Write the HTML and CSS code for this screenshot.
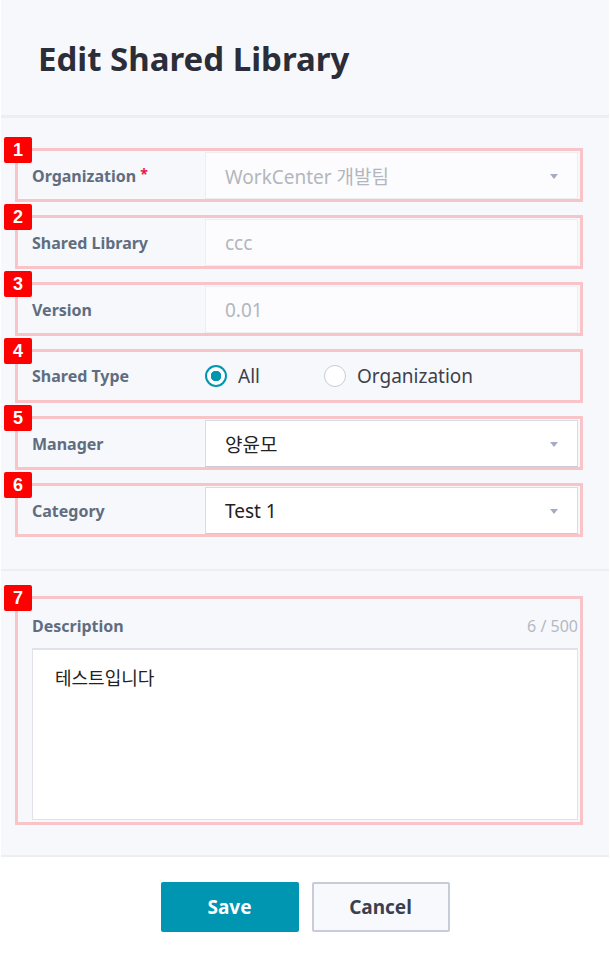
FILE: index.html
```html
<!DOCTYPE html>
<html lang="en">
  <head>
    <meta charset="UTF-8" />
    <meta name="viewport" content="width=device-width, initial-scale=1.0" />
    <title>Edit Shared Library</title>

    <link rel="stylesheet" href="styles.css">
  </head>
  <body>
    <div class="panel">
      <div class="panel-header">
        <h1 class="title">Edit Shared Library</h1>
      </div>

      <div class="form">
        <div class="row mark">
          <span class="badge">1</span>
          <label class="label">Organization <span class="req">*</span></label>
          <div class="field disabled select">WorkCenter 개발팀<span class="caret"></span></div>
        </div>

        <div class="row mark">
          <span class="badge">2</span>
          <label class="label">Shared Library</label>
          <div class="field disabled">ccc</div>
        </div>

        <div class="row mark">
          <span class="badge">3</span>
          <label class="label">Version</label>
          <div class="field disabled">0.01</div>
        </div>

        <div class="row mark">
          <span class="badge">4</span>
          <label class="label">Shared Type</label>
          <div class="radios">
            <label class="radio checked"><span class="dot"></span>All</label>
            <label class="radio"><span class="dot"></span>Organization</label>
          </div>
        </div>

        <div class="row mark">
          <span class="badge">5</span>
          <label class="label">Manager</label>
          <div class="field select">양윤모<span class="caret"></span></div>
        </div>

        <div class="row mark">
          <span class="badge">6</span>
          <label class="label">Category</label>
          <div class="field select">Test 1<span class="caret"></span></div>
        </div>
      </div>

      <div class="desc-section">
        <div class="desc mark">
          <span class="badge">7</span>
          <div class="desc-head">
            <label class="label">Description</label>
            <span class="counter">6 / 500</span>
          </div>
          <div class="textarea">테스트입니다</div>
        </div>
      </div>

      <div class="footer">
        <button class="btn save">Save</button>
        <button class="btn cancel">Cancel</button>
      </div>
    </div>
  </body>
</html>
```

FILE: styles.css
```css
* {
  box-sizing: border-box;
  margin: 0;
  padding: 0;
  font-family: "Noto Sans", "Noto Sans CJK KR", sans-serif;
}

body {
  background-color: #ffffff;
  width: 610px;
  height: 956px;
  overflow: hidden;
}

.panel {
  margin: 0 1px;
}

.panel-header {
  height: 118px;
  padding: 39px 37px 0;
  background-color: #f7f8fc;
  border-bottom: 3px solid #eceef3;
}

.title {
  font-size: 33px;
  line-height: 40px;
  font-weight: 700;
  color: #2b2e38;
}

.form {
  display: flex;
  flex-direction: column;
  gap: 13px;
  padding: 30px 0 32px;
  background-color: #f7f8fc;
  border-bottom: 2px solid #eceef3;
}

/* pink annotation frames + red number badges */
.mark {
  position: relative;
  margin-left: 14px;
  width: 568px;
  border: 3px solid #f8c4c7;
}

.badge {
  position: absolute;
  left: -14px;
  top: -14px;
  width: 28px;
  height: 26px;
  border-radius: 2px;
  background-color: #ff0000;
  color: #fff;
  font-family: "Liberation Sans", Arial, sans-serif;
  font-weight: 700;
  font-size: 18px;
  line-height: 26px;
  text-align: center;
}

.row {
  display: grid;
  grid-template-columns: 187px 1fr;
  align-items: center;
  height: 54px;
  padding: 1px 2px 1px 0;
}

.label {
  padding-left: 14px;
  font-size: 16px;
  font-weight: 700;
  color: #606d80;
}

.req {
  color: #e8174a;
  font-size: 14px;
  vertical-align: 3px;
}

.field {
  position: relative;
  height: 47px;
  padding-left: 19px;
  display: flex;
  align-items: center;
  font-size: 19px;
  color: #222;
  background-color: #fff;
  border: 1px solid #d9dce4;
  border-bottom-color: #c9ccd6;
}

.field.disabled {
  color: #b3b6bd;
  background-color: #fcfcfe;
  border-color: #eceef2;
}

.caret {
  position: absolute;
  right: 19px;
  top: 21px;
  border-left: 4px solid transparent;
  border-right: 4px solid transparent;
  border-top: 5px solid #a4abc6;
}

.radios {
  display: flex;
  align-items: center;
}

.radio {
  display: flex;
  align-items: center;
  gap: 11px;
  font-size: 19px;
  color: #3d414c;
}

.radio:first-child {
  width: 119px;
}

.dot {
  width: 22px;
  height: 22px;
  border-radius: 50%;
  border: 1.5px solid #c9ccd8;
  background-color: #fff;
}

.radio.checked .dot {
  border: 2px solid #0096b1;
  background: radial-gradient(circle, #0096b1 0 5px, #fff 5.5px);
}

.desc-section {
  padding: 25px 0 30px;
  background-color: #f7f8fc;
  border-bottom: 2px solid #eceef3;
}

.desc {
  height: 229px;
  padding: 0 2px 2px 0;
  display: flex;
  flex-direction: column;
}

.desc-head {
  display: flex;
  justify-content: space-between;
  align-items: flex-start;
  height: 49px;
  padding-top: 16px;
}

.counter {
  font-size: 16px;
  color: #b4b8c4;
}

.textarea {
  flex: 1;
  margin-left: 14px;
  padding: 14px 22px;
  font-size: 18px;
  color: #222;
  background-color: #fff;
  border: 1px solid #e0e3ea;
  border-top: 2px solid #dfe2e8;
}

.footer {
  display: flex;
  justify-content: center;
  gap: 13px;
  padding-top: 25px;
}

.btn {
  width: 138px;
  height: 50px;
  font-size: 19px;
  font-weight: 700;
  border-radius: 2px;
  cursor: pointer;
}

.save {
  background-color: #0096b1;
  color: #fff;
  border: none;
}

.cancel {
  background-color: #f8f9fc;
  color: #3b3f4e;
  border: 2px solid #c8ccd9;
}
```
